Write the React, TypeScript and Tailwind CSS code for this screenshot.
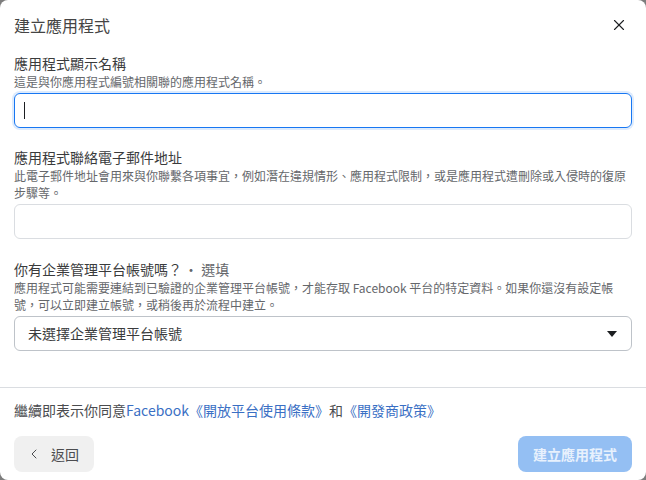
import { ChevronLeft, X } from "lucide-react";

const font = { fontFamily: '"Noto Sans CJK TC", "Liberation Sans", sans-serif' };

function Label({ children }: { children: React.ReactNode }) {
  return <div className="text-[14px] leading-[18px] text-[#3a3b3c]">{children}</div>;
}

function Hint({ children }: { children: React.ReactNode }) {
  return <div className="mt-[1px] text-[12px] leading-[17px] text-[#65676b]">{children}</div>;
}

export default function App() {
  return (
    <div className="h-[480px] w-full bg-[#7d7d7d]" style={font}>
      <div className="flex h-full w-full flex-col rounded-lg bg-white">
        <div className="flex items-center justify-between px-[14px] pt-[15px]">
          <h1 className="text-[16px] leading-[20px] text-[#444]">建立應用程式</h1>
          <button className="mr-[4px] text-[#1c1e21]">
            <X size={18} strokeWidth={1.5} />
          </button>
        </div>

        <div className="px-[14px]">
          <div className="mt-[19px]">
            <Label>應用程式顯示名稱</Label>
            <Hint>這是與你應用程式編號相關聯的應用程式名稱。</Hint>
            <div className="mt-[3px] flex h-[35px] items-center rounded-md border border-[#1877f2] px-[9px] shadow-[0_0_0_2px_rgba(24,119,242,0.15)]">
              <span className="h-[17px] w-[1px] bg-[#1c1e21]" />
            </div>
          </div>

          <div className="mt-[20px]">
            <Label>應用程式聯絡電子郵件地址</Label>
            <Hint>
              此電子郵件地址會用來與你聯繫各項事宜，例如潛在違規情形、應用程式限制，或是應用程式遭刪除或入侵時的復原步驟等。
            </Hint>
            <div className="mt-[3px] h-[35px] rounded-md border border-[#dadde1]" />
          </div>

          <div className="mt-[21px]">
            <Label>
              你有企業管理平台帳號嗎？<span className="ml-[2px] text-[#65676b]">· 選填</span>
            </Label>
            <Hint>
              應用程式可能需要連結到已驗證的企業管理平台帳號，才能存取 Facebook 平台的特定資料。如果你還沒有設定帳號，可以立即建立帳號，或稍後再於流程中建立。
            </Hint>
            <div className="mt-[3px] flex h-[35px] items-center justify-between rounded-md border border-[#bec3c9] pl-[13px] pr-[14px]">
              <span className="text-[14px] text-[#3a3b3c]">未選擇企業管理平台帳號</span>
              <svg width="10" height="6" viewBox="0 0 10 6">
                <path d="M0 0 H10 L5 6 Z" fill="#1c1e21" />
              </svg>
            </div>
          </div>
        </div>

        <div className="mt-[36px] border-t border-[#dadde1]" />

        <div className="px-[14px] pt-[12px] text-[14px] leading-[20px] text-[#4b4c4f]">
          繼續即表示你同意
          <a href="#" className="text-[#3a6fc4]">
            Facebook《開放平台使用條款》
          </a>
          和
          <a href="#" className="text-[#3a6fc4]">
            《開發商政策》
          </a>
        </div>

        <div className="mt-[16px] flex items-center justify-between px-[14px]">
          <button className="flex h-[36px] w-[80px] items-center gap-[9px] rounded-lg bg-[#f0f0f0] pl-[12px] text-[14px] text-[#4b4c4f]">
            <ChevronLeft size={16} strokeWidth={1.5} />
            返回
          </button>
          <button className="h-[36px] w-[114px] rounded-lg bg-[#94bff3] text-[14px] font-bold text-[#e8f1fd]">
            建立應用程式
          </button>
        </div>
      </div>
    </div>
  );
}
